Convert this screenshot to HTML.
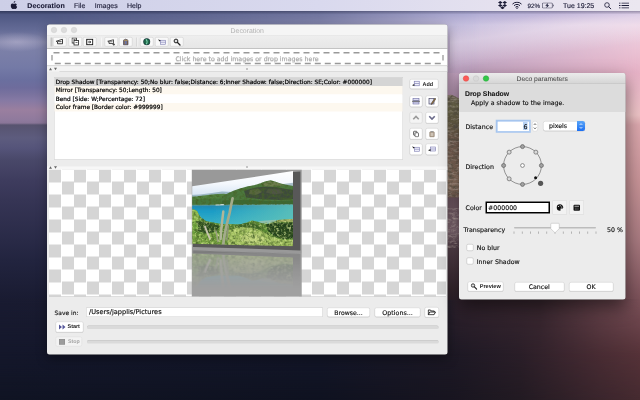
<!DOCTYPE html>
<html lang="en"><head><meta charset="utf-8"><title>Decoration</title>
<style>
html,body{margin:0;padding:0;width:640px;height:400px;overflow:hidden;background:#1a1d35}
#stage{text-rendering:geometricPrecision;position:absolute;left:0;top:0;width:1280px;height:800px;transform:scale(.5);transform-origin:0 0;overflow:hidden;font-family:"DejaVu Sans","Liberation Sans",sans-serif;color:#111}
#stage div,#stage svg,#stage span{position:absolute;box-sizing:border-box}
.t{white-space:pre;line-height:1;-webkit-text-stroke:.3px currentColor}
.mb{-webkit-text-stroke:.25px currentColor;font-family:"Liberation Sans",sans-serif;font-size:14px;color:#1b1b36;top:4px;line-height:15px;white-space:pre}
.btn{background:#fff;border:1px solid #cfcfcf;border-radius:4px;box-shadow:0 1px 1px rgba(0,0,0,.12)}
.tb{background:#f9f9f9;border:1px solid #c9c9c9;border-radius:3px}
.row{left:0;width:100%;height:17px}
.lt{-webkit-text-stroke:.4px currentColor;font-size:11.62px;left:2.5px;top:2.5px;color:#000;white-space:pre;line-height:13px}
</style></head>
<body><div id="stage">
<div style="left:0;top:0;width:1280px;height:800px;background:linear-gradient(to bottom,#465078 0px,#465078 22px,#4f5883 30px,#646b96 60px,#8587ab 84px,#7c80a8 100px,#747aa6 135px,#6a6f9f 160px,#6e6c9c 175px,#7b739f 190px,#8579a4 200px,#9a7f9f 220px,#8f7a9d 240px,#8a7698 246px,#58546f 250px,#595674 258px,#5d5c7e 276px,#55547a 296px,#494869 320px,#3e3c5e 360px,#363555 400px,#292a47 480px,#22243f 520px,#191b31 600px,#14172b 710px,#101423 800px)"></div>
<div style="left:0;top:50px;width:100px;height:70px;background:radial-gradient(ellipse 62px 20px at 34px 34px,rgba(200,195,222,.42),rgba(200,195,222,0))"></div>
<div style="left:0;top:0;width:1280px;height:200px;background:linear-gradient(to bottom,#a9a7d2 0px,#a9a7d2 22px,#bcb6da 36px,#cbc3e1 50px,#c6b3d0 90px,#bfa0bc 146px,#b997b3 200px);-webkit-mask-image:linear-gradient(to right,rgba(0,0,0,0) 94px,rgba(0,0,0,0.17) 400px,rgba(0,0,0,0.35) 640px,rgba(0,0,0,0.68) 800px,rgba(0,0,0,0.9) 900px,rgba(0,0,0,1) 960px);mask-image:linear-gradient(to right,rgba(0,0,0,0) 94px,rgba(0,0,0,0.17) 400px,rgba(0,0,0,0.35) 640px,rgba(0,0,0,0.68) 800px,rgba(0,0,0,0.9) 900px,rgba(0,0,0,1) 960px)"></div>
<div style="left:0;top:0;width:1280px;height:200px;background:linear-gradient(to bottom,#c8b8dc 0px,#c8b8dc 22px,#ecd4e4 50px,#ebc2d4 100px,#e6b2c6 146px,#e8b6c4 200px);-webkit-mask-image:linear-gradient(to right,rgba(0,0,0,0) 940px,rgba(0,0,0,1) 1280px);mask-image:linear-gradient(to right,rgba(0,0,0,0) 940px,rgba(0,0,0,1) 1280px)"></div>
<div style="left:900px;top:22px;width:380px;height:124px;background:linear-gradient(172deg,rgba(255,255,255,0) 18%,rgba(255,250,255,.28) 36%,rgba(255,250,255,.22) 46%,rgba(255,255,255,0) 66%)"></div>
<div style="left:1236px;top:146px;width:44px;height:454px;background:linear-gradient(to bottom,#e6b2c6 0px,#ecbec8 54px,#eec4c6 84px,#dca8ae 104px,#c89498 214px,#a87a80 334px,#7a5058 454px)"></div>
<div style="left:0;top:598px;width:1280px;height:202px;background:linear-gradient(to right,#14172b 0px,#131628 640px,#1c1824 900px,#2a1e28 1040px,#482c33 1200px,#553238 1280px)"></div>
<div style="left:0;top:598px;width:1280px;height:202px;background:linear-gradient(to right,#191b31 0px,#221f2c 880px,#30222c 920px,#3a2830 1080px,#64424a 1200px,#7a5058 1280px);-webkit-mask-image:linear-gradient(to bottom,#000 0,#000 2px,rgba(0,0,0,0) 112px);mask-image:linear-gradient(to bottom,#000 0,#000 2px,rgba(0,0,0,0) 112px)"></div>
<div style="left:0;top:598px;width:1280px;height:202px;background:linear-gradient(to right,#101423 0px,#0f1220 640px,#181520 900px,#221a22 1040px,#3a252c 1200px,#452a30 1280px);-webkit-mask-image:linear-gradient(to bottom,rgba(0,0,0,0) 112px,#000 202px);mask-image:linear-gradient(to bottom,rgba(0,0,0,0) 112px,#000 202px)"></div>
<svg style="left:884px;top:146px" width="46" height="454" viewBox="0 0 46 454"><defs><linearGradient id="gsky" x1="0" y1="0" x2="0" y2="1"><stop offset="0" stop-color="#bfa0bc"/><stop offset="1" stop-color="#b08fab"/></linearGradient><linearGradient id="gis" gradientUnits="userSpaceOnUse" x1="0" y1="44" x2="0" y2="250"><stop offset="0" stop-color="#86796a"/><stop offset=".1" stop-color="#716d4e"/><stop offset=".28" stop-color="#6d6349"/><stop offset=".45" stop-color="#7b6355"/><stop offset=".7" stop-color="#846b5b"/><stop offset=".88" stop-color="#957967"/><stop offset="1" stop-color="#735b4f"/></linearGradient><linearGradient id="gwa" gradientUnits="userSpaceOnUse" x1="0" y1="249" x2="0" y2="454"><stop offset="0" stop-color="#6e5660"/><stop offset=".15" stop-color="#765e68"/><stop offset=".33" stop-color="#826a74"/><stop offset=".48" stop-color="#57434d"/><stop offset=".9" stop-color="#37272f"/><stop offset="1" stop-color="#30222c"/></linearGradient><filter id="gn" x="0" y="0" width="100%" height="100%"><feTurbulence type="fractalNoise" baseFrequency=".09 .16" numOctaves="3" seed="11"/><feColorMatrix values="0 0 0 0 .12  0 0 0 0 .1  0 0 0 0 .07  2.0 1.3 0 0 -1.5"/></filter><filter id="gl" x="0" y="0" width="100%" height="100%"><feTurbulence type="fractalNoise" baseFrequency=".1 .2" numOctaves="3" seed="29"/><feColorMatrix values="0 0 0 0 .72  0 0 0 0 .62  0 0 0 0 .55  0 1.6 1.6 0 -1.5"/></filter><clipPath id="gic"><polygon points="0,46 11,44.500 18,43.600 26,46.500 34,51 46,57 46,250 0,250"/></clipPath></defs><rect width="46" height="60" fill="url(#gsky)"/><polygon points="0,46 11,44.500 18,43.600 26,46.500 34,51 46,57 46,250 0,250" fill="url(#gis)"/><g clip-path="url(#gic)"><rect y="40" width="46" height="212" filter="url(#gn)"/><rect y="40" width="46" height="212" filter="url(#gl)" opacity=".55"/></g><rect y="249" width="46" height="205" fill="url(#gwa)"/><rect y="270" width="46" height="80" filter="url(#gl)" opacity=".55"/></svg>
<div style="left:0;top:0;width:1280px;height:22px;background:linear-gradient(to right,#cdcfe7,#d9d9ee 50%,#e6e2ef 80%,#ebe7f0)"></div>
<div style="left:0;top:22px;width:1280px;height:7px;background:linear-gradient(to bottom,rgba(0,0,20,.28),rgba(0,0,20,0))"></div>
<svg style="left:21px;top:2px" width="14" height="17" viewBox="0 0 14 17"><path fill="#1b1b36" d="M9.6 0c.1 1-.3 1.9-.9 2.6-.6.7-1.500 1.200-2.400 1.100-.1-.9.400-1.900.9-2.500C7.800.5 8.800.1 9.600 0zM12.900 5.800c-.9.600-1.500 1.500-1.500 2.700 0 1.400.800 2.500 2 3-.300.900-.700 1.700-1.200 2.400-.700 1-1.400 2-2.500 2s-1.400-.600-2.600-.600-1.600.600-2.600.600-1.800-1-2.500-2C.600 12-.300 8.900.900 6.800c.600-1.100 1.800-1.800 3-1.800 1.100 0 1.900.700 2.800.700.900 0 1.500-.700 2.900-.700.900 0 2.300.400 3.300 1.800z"/></svg>
<span class="mb" style="left:54.5px;font-weight:700;letter-spacing:.2px">Decoration</span>
<span class="mb" style="left:148px">File</span>
<span class="mb" style="left:189.5px">Images</span>
<span class="mb" style="left:254px">Help</span>
<span class="mb" style="left:1055px;font-size:12.5px">92%</span>
<span class="mb" style="left:1126px">Tue 19:25</span>
<svg style="left:996px;top:2px" width="18" height="17" viewBox="0 0 18 17"><g fill="#1b1b36"><path d="M4.500 0L9 3 4.500 6 0 3zM13.500 0L18 3 13.500 6 9 3zM4.500 6L9 9 4.500 12 0 9zM13.500 6L18 9 13.500 12 9 9zM9 10.500l4.500 3L9 16.500l-4.500-3z"/></g></svg>
<svg style="left:1024px;top:3px" width="20" height="15" viewBox="0 0 20 15"><g fill="none" stroke="#1b1b36" stroke-width="2" stroke-linecap="butt"><path d="M1 5.200a12.500 12.500 0 0 1 18 0"/><path d="M4 8.400a8.300 8.300 0 0 1 12 0"/><path d="M7 11.400a4.200 4.200 0 0 1 6 0"/></g><circle cx="10" cy="13.500" r="1.400" fill="#1b1b36"/></svg>
<svg style="left:1084px;top:5px" width="25" height="12" viewBox="0 0 25 12"><rect x=".75" y=".75" width="20" height="10.500" rx="2" fill="none" stroke="#1b1b36" stroke-width="1.500" stroke-opacity=".75"/><path d="M22.500 4v4c1-.300 1.500-1 1.500-2s-.500-1.700-1.500-2z" fill="#1b1b36" fill-opacity=".75"/><path d="M12 1.200L6.500 6.500h3.500l-1.500 4.300L14.500 5.300h-3.500z" fill="#1b1b36"/></svg>
<svg style="left:1208px;top:4px" width="15" height="15" viewBox="0 0 15 15"><circle cx="6" cy="6" r="4.600" fill="none" stroke="#1b1b36" stroke-width="1.600"/><path d="M9.400 9.400L14 14" stroke="#1b1b36" stroke-width="1.900" stroke-linecap="round"/></svg>
<svg style="left:1238px;top:5px" width="20" height="12" viewBox="0 0 20 12"><g fill="#1b1b36"><rect x="0" y="0" width="3" height="2"/><rect x="5" y="0" width="15" height="2"/><rect x="0" y="5" width="3" height="2"/><rect x="5" y="5" width="15" height="2"/><rect x="0" y="10" width="3" height="2"/><rect x="5" y="10" width="15" height="2"/></g></svg>
<div id="mw" style="left:94px;top:49px;width:801px;height:660px;background:#ececec;border-radius:5px;box-shadow:0 0 1px rgba(0,0,0,.5),0 8px 22px rgba(0,0,0,.35);overflow:hidden"><div style="left:0;top:0;width:801px;height:22px;background:#f5f5f5;border-bottom:1px solid #d4d4d4"></div><div style="left:8px;top:5px;width:12px;height:12px;border-radius:6px;background:#dcdcdc;border:1px solid #cfcfcf"></div><div style="left:28px;top:5px;width:12px;height:12px;border-radius:6px;background:#dcdcdc;border:1px solid #cfcfcf"></div><div style="left:48px;top:5px;width:12px;height:12px;border-radius:6px;background:#dcdcdc;border:1px solid #cfcfcf"></div><span class="t" style="left:0;width:801px;top:4px;text-align:center;font-family:'Liberation Sans',sans-serif;font-size:13.800px;color:#b2b2b2;line-height:15px;-webkit-text-stroke:0">Decoration</span><div style="left:0;top:22px;width:801px;height:27px;background:linear-gradient(#eeeeee,#e6e6e6);border-bottom:1px solid #9c9c9c"></div><div style="left:7px;top:26px;width:4px;height:18px;background:repeating-linear-gradient(#c4c4c4 0 1px,#efefef 1px 2px)"></div><div class="tb" style="left:12.0px;top:25px;width:27px;height:19px"></div><div class="tb" style="left:43.0px;top:25px;width:27px;height:19px"></div><div class="tb" style="left:72.0px;top:25px;width:27px;height:19px"></div><div class="tb" style="left:114.8px;top:25px;width:27px;height:19px"></div><div class="tb" style="left:144.0px;top:25px;width:27px;height:19px"></div><div class="tb" style="left:185.5px;top:25px;width:27px;height:19px"></div><div class="tb" style="left:216.0px;top:25px;width:27px;height:19px"></div><div class="tb" style="left:245.5px;top:25px;width:27px;height:19px"></div><div style="left:108.0px;top:26px;width:2px;height:18px;background:linear-gradient(to right,#c9c9c9 50%,#f6f6f6 50%)"></div><div style="left:178.5px;top:26px;width:2px;height:18px;background:linear-gradient(to right,#c9c9c9 50%,#f6f6f6 50%)"></div><svg style="left:17.0px;top:28.0px" width="17" height="14" viewBox="0 0 17 14"><path d="M1.500 5.500L14 1.500v9H4V6.800z" fill="#fff" stroke="#1a1a1a" stroke-width="1.700" stroke-linejoin="round"/><path d="M4 6.300h8" stroke="#1a1a1a" stroke-width="1.500"/></svg><svg style="left:49.0px;top:26.0px" width="16" height="17" viewBox="0 0 16 17"><rect x="1" y="1" width="9" height="10" fill="#fff" stroke="#222" stroke-width="1.600"/><rect x="5" y="6" width="9" height="9" fill="#fff" stroke="#222" stroke-width="1.600"/><path d="M4 4h4M8 10h4" stroke="#222" stroke-width="1.300"/></svg><svg style="left:78.0px;top:28.0px" width="15" height="14" viewBox="0 0 15 14"><rect x="1.500" y="1.500" width="12" height="11" fill="#fff" stroke="#111" stroke-width="2"/><path d="M4 7h5M7 4.500L9.500 7 7 9.500" fill="none" stroke="#111" stroke-width="1.600"/></svg><svg style="left:119.8px;top:29.0px" width="18" height="14" viewBox="0 0 18 14"><path d="M1.500 4.500L13 1.500v7.500H4V6z" fill="#fff" stroke="#2a2a2a" stroke-width="1.600" stroke-linejoin="round"/><path d="M4 5.500h7" stroke="#2a2a2a" stroke-width="1.300"/><path d="M11 11h5M13.500 8.500v5" stroke="#2a2a2a" stroke-width="1.400"/></svg><svg style="left:150.0px;top:27.0px" width="15" height="16" viewBox="0 0 15 16"><path d="M3 4.500Q7.500 0 12 4.500v9H3z" fill="#8a6d4f" stroke="#3a3a5a" stroke-width="1.300"/><rect x="5.500" y="6" width="4" height="6" fill="#6a77a8"/><path d="M3 4.500h9" stroke="#c8b070" stroke-width="1.200"/></svg><svg style="left:191.5px;top:27.0px" width="15" height="15" viewBox="0 0 15 15"><circle cx="7.500" cy="7.500" r="6.500" fill="#1f6a4a" stroke="#123" stroke-width="1.200"/><path d="M6 2.500Q10 7 6.500 12.500" stroke="#7fd0b0" stroke-width="2.200" fill="none"/></svg><svg style="left:221.0px;top:28.0px" width="18" height="14" viewBox="0 0 18 14"><rect x="6" y="3.500" width="10" height="8" fill="#f0f0fb" stroke="#7a7ab0" stroke-width="1.200"/><path d="M6 7.500h10" stroke="#7a7ab0" stroke-width="1.200"/><path d="M1.500 1.500l5 2.500-3 2z" fill="#222"/></svg><svg style="left:251.5px;top:27.0px" width="16" height="16" viewBox="0 0 16 16"><circle cx="6" cy="6" r="3.800" fill="#ddd" stroke="#222" stroke-width="2"/><path d="M9 9l5 5" stroke="#222" stroke-width="2.600" stroke-linecap="round"/></svg><div style="left:0;top:49px;width:801px;height:34px;background:#fff;border-bottom:1px solid #b8b8b8"></div><svg style="left:0;top:48px" width="801" height="35" viewBox="0 0 801 35"><g stroke="#999999" stroke-width="2.600" fill="none"><path d="M13 8.500H786" stroke-dasharray="12 8"/><path d="M15.500 30H788" stroke-dasharray="12 8"/><path d="M10 13v11M792 13v11"/></g></svg><span class="t" style="left:257px;top:61px;font-size:12.52px;color:#aaaaaa;line-height:15px;text-shadow:0 1px 0 #e4e4e4">Click here to add images or drop images here</span><div style="left:0;top:84px;width:801px;height:10px;background:#f4f4f4"></div><div style="left:25px;top:93.500px;width:776px;height:1px;background:#c6c6c6"></div><svg style="left:2px;top:85px" width="24" height="8" viewBox="0 0 24 8"><path d="M2 6.500l3-5 3 5zM12 1.500l3 5 3-5z" fill="#666"/></svg><div style="left:398px;top:87px;width:4px;height:4px;border-radius:2px;background:#b5b5b5"></div><div style="left:14px;top:104.500px;width:698px;height:165px;background:#fff;border:1px solid #cdcdcd;border-top-color:#b4b4b4;overflow:hidden"></div><div style="left:15px;top:105.5px;width:696px;height:17px;background:#d5d5d5"><span class="lt">Drop Shadow [Transparency: 50;No blur: false;Distance: 6;Inner Shadow: false;Direction: SE;Color: #000000]</span></div><div style="left:15px;top:122.5px;width:696px;height:17px;background:#fdf8ef"><span class="lt">Mirror [Transparency: 50;Length: 50]</span></div><div style="left:15px;top:139.5px;width:696px;height:17px;background:#ffffff"><span class="lt">Bend [Side: W;Percentage: 72]</span></div><div style="left:15px;top:156.5px;width:696px;height:17px;background:#fdf8ef"><span class="lt">Color frame [Border color: #999999]</span></div><div class="btn" style="left:725px;top:109px;width:58px;height:20px"></div><span class="t" style="left:751px;top:112.500px;font-family:'Liberation Sans',sans-serif;font-size:10.900px;font-weight:700;color:#222;line-height:13px;-webkit-text-stroke:0">Add</span><svg style="left:729.0px;top:111.0px" width="20" height="14" viewBox="0 0 20 14"><rect x="5.500" y="2.500" width="10" height="9" fill="#f1f1fb" stroke="#7d7db0" stroke-width="1.300"/><path d="M5.500 7h10" stroke="#7d7db0" stroke-width="1.300"/><path d="M1 10.500l4.500-2.500v4z" fill="#1a1a1a"/></svg><div class="btn" style="left:725px;top:142.0px;width:26px;height:23px;"></div><svg style="left:729.0px;top:146.0px" width="18" height="15" viewBox="0 0 18 15"><rect x="3" y="2" width="12" height="4" fill="#dcdcf2" stroke="#6a6aa2" stroke-width="1.200"/><rect x="3" y="9" width="12" height="4" fill="#dcdcf2" stroke="#6a6aa2" stroke-width="1.200"/><path d="M1 7.500h16" stroke="#333" stroke-width="1.500"/></svg><div class="btn" style="left:757px;top:142.0px;width:26px;height:23px;"></div><svg style="left:761.0px;top:146.0px" width="18" height="15" viewBox="0 0 18 15"><rect x="3" y="2" width="10" height="11" fill="#e8e8f4" stroke="#4a4a6a" stroke-width="1.400"/><path d="M15 1L8 11l-1 3 3-1.500L16.500 3z" fill="#a07840" stroke="#333" stroke-width="1"/></svg><div class="btn" style="left:725px;top:174.5px;width:26px;height:23px;background:#f4f4f4;box-shadow:none;"></div><svg style="left:729.0px;top:178.5px" width="18" height="15" viewBox="0 0 18 15"><path d="M3.500 10.500l5.500-5.500 5.500 5.500" fill="none" stroke="#9a9a9a" stroke-width="3.200"/></svg><div class="btn" style="left:757px;top:174.5px;width:26px;height:23px;"></div><svg style="left:761.0px;top:178.5px" width="18" height="15" viewBox="0 0 18 15"><path d="M3.500 4.500l5.500 5.500 5.500-5.500" fill="none" stroke="#6a6a8a" stroke-width="3.200"/></svg><div class="btn" style="left:725px;top:206.5px;width:26px;height:23px;"></div><svg style="left:729.0px;top:210.5px" width="18" height="15" viewBox="0 0 18 15"><rect x="4" y="2.500" width="7" height="8" rx="1.500" fill="#ddd" stroke="#3a3a3a" stroke-width="1.400"/><rect x="7" y="5.500" width="7" height="8" rx="1.500" fill="#fff" stroke="#3a3a3a" stroke-width="1.400"/></svg><div class="btn" style="left:757px;top:206.5px;width:26px;height:23px;"></div><svg style="left:761.0px;top:210.5px" width="18" height="15" viewBox="0 0 18 15"><rect x="4.500" y="3.500" width="9" height="10.500" rx="1.500" fill="#b5a592" stroke="#8c7d6e" stroke-width="1.200"/><rect x="6.500" y="6" width="5" height="6" fill="#cdc3b6"/><rect x="6.500" y="2" width="5" height="2.500" fill="#9a9a9a"/></svg><div class="btn" style="left:725px;top:238.0px;width:26px;height:23px;"></div><svg style="left:729.0px;top:242.0px" width="18" height="15" viewBox="0 0 18 15"><rect x="6" y="3.500" width="10" height="8" fill="#f0f0fb" stroke="#7a7ab0" stroke-width="1.200"/><path d="M6 7.500h10" stroke="#7a7ab0" stroke-width="1.200"/><path d="M1.500 1.500l5 2.500-3 2z" fill="#222"/></svg><div class="btn" style="left:757px;top:238.0px;width:26px;height:23px;"></div><svg style="left:761.0px;top:242.0px" width="18" height="15" viewBox="0 0 18 15"><rect x="6" y="3" width="10" height="8" fill="#f0f0fb" stroke="#7a7ab0" stroke-width="1.200"/><path d="M6 7h10" stroke="#7a7ab0" stroke-width="1.200"/><path d="M1 9.500l5-2.500v4.500z" fill="#222"/></svg><div style="left:0;top:283.500px;width:801px;height:7px;background:#f7f7f7"></div><svg style="left:2px;top:282px" width="24" height="8" viewBox="0 0 24 8"><path d="M2 6.500l3-5 3 5zM12 1.500l3 5 3-5z" fill="#666"/></svg><div style="left:398px;top:282.500px;width:4px;height:4px;border-radius:2px;background:#b5b5b5"></div><div id="pv" style="left:4px;top:290px;width:794px;height:255px;overflow:hidden;background-color:#fff;background-image:repeating-conic-gradient(#fff 0 25%,#d5d5d5 0 50%);background-size:50px 50px;border-bottom:1px solid #bdbdbd"><svg style="left:0;top:0" width="794" height="255" viewBox="0 0 794 255"><defs><clipPath id="q"><polygon points="286.4,33.6 488.0,3.2 488.0,153.6 286.4,148.6"/></clipPath><linearGradient id="sky" gradientUnits="userSpaceOnUse" x1="0" y1="3.0" x2="0" y2="59.0"><stop offset="0" stop-color="#ffffff"/><stop offset=".45" stop-color="#f4f8fd"/><stop offset="1" stop-color="#cfe0f2"/></linearGradient><linearGradient id="sea" gradientUnits="userSpaceOnUse" x1="0" y1="71.0" x2="0" y2="111.0"><stop offset="0" stop-color="#2286ae"/><stop offset=".3" stop-color="#1b9cc6"/><stop offset="1" stop-color="#3ab2c6"/></linearGradient><linearGradient id="sea2" gradientUnits="userSpaceOnUse" x1="326.0" y1="0" x2="490.0" y2="0"><stop offset="0" stop-color="#6fcab8" stop-opacity="0"/><stop offset="1" stop-color="#66c6b6" stop-opacity=".8"/></linearGradient><linearGradient id="fade" x1="0" y1="0" x2="0" y2="1"><stop offset="0" stop-color="#fff" stop-opacity=".42"/><stop offset=".75" stop-color="#fff" stop-opacity=".08"/><stop offset="1" stop-color="#fff" stop-opacity="0"/></linearGradient><mask id="mf" maskUnits="userSpaceOnUse" x="0" y="0" width="794" height="255"><rect x="278.0" y="155.0" width="240" height="82.0" fill="url(#fade)"/></mask><filter id="b1" x="-20%" y="-20%" width="140%" height="140%"><feGaussianBlur stdDeviation="1.1"/></filter><filter id="b2" x="-5%" y="-5%" width="110%" height="110%"><feGaussianBlur stdDeviation=".8"/></filter><filter id="nz" x="0" y="0" width="100%" height="100%"><feTurbulence type="fractalNoise" baseFrequency=".16" numOctaves="3" seed="7"/><feColorMatrix values="0 0 0 0 .06  0 0 0 0 .12  0 0 0 0 .02  1.7 1.3 0 0 -1.3"/></filter><filter id="nz2" x="0" y="0" width="100%" height="100%"><feTurbulence type="fractalNoise" baseFrequency=".2" numOctaves="3" seed="23"/><feColorMatrix values="0 0 0 0 .68  0 0 0 0 .8  0 0 0 0 .3  0 1.5 1.3 0 -1.36"/></filter><clipPath id="veg"><polygon points="346.0,54.0 358.0,47.4 382.0,38.2 410.0,31.6 432.0,24.2 443.0,21.6 462.0,27.4 494.0,34.0 494.0,70.6 278.0,71.4 278.0,55.0 310.0,51.8 338.0,48.8"/><polygon points="278.0,81.0 290.0,80.0 300.0,91.0 314.0,103.0 346.0,109.0 382.0,110.0 406.0,102.0 426.0,107.0 450.0,104.0 458.0,101.0 494.0,99.4 494.0,161.0 278.0,161.0"/></clipPath><clipPath id="veg2"><polygon points="278.0,81.0 290.0,80.0 300.0,91.0 314.0,103.0 346.0,109.0 382.0,110.0 406.0,102.0 426.0,107.0 450.0,104.0 458.0,101.0 494.0,99.4 494.0,161.0 278.0,161.0"/></clipPath><g id="ph"><g clip-path="url(#q)"><g filter="url(#b2)"><polygon points="278.0,-7.0 494.0,-7.0 494.0,81.0 278.0,81.0" fill="url(#sky)"/><polygon points="278.0,51.0 302.0,50.0 326.0,47.0 346.0,44.0 366.0,45.0 382.0,47.0 382.0,61.0 278.0,61.0" fill="#9db8c6"/><polygon points="462.0,30.0 476.0,28.0 494.0,26.0 494.0,41.0 462.0,41.0" fill="#a9bfca"/><polygon points="278.0,55.0 294.0,53.8 310.0,51.8 326.0,49.8 338.0,48.8 350.0,48.4 362.0,51.0 378.0,57.0 378.0,73.0 278.0,73.0" fill="#52823f"/><polygon points="278.0,62.0 310.0,59.0 346.0,58.0 374.0,62.0 374.0,73.0 278.0,73.0" fill="#47753a"/><polygon points="346.0,54.0 358.0,47.4 370.0,42.2 382.0,38.2 396.0,34.2 410.0,31.6 422.0,28.0 432.0,24.2 443.0,21.6 452.0,24.0 462.0,27.4 474.0,30.6 494.0,34.0 494.0,73.0 346.0,73.0" fill="#4c773d"/><polygon points="390.0,42.0 414.0,36.0 434.0,34.0 454.0,35.0 474.0,39.0 494.0,41.0 494.0,59.0 462.0,61.0 426.0,59.6 394.0,56.0" fill="#3e4b3b"/><polygon points="426.0,28.2 443.0,22.4 458.0,27.0 470.0,32.2 450.0,34.2 430.0,33.4" fill="#6d7c4e"/><polygon points="402.0,41.0 418.0,38.0 426.0,45.0 414.0,51.0 400.0,49.0" fill="#59663f"/><polygon points="438.0,39.0 462.0,40.0 470.0,47.0 450.0,50.0 434.0,46.0" fill="#4f5544"/><polygon points="346.0,62.0 402.0,60.6 442.0,63.4 494.0,62.2 494.0,71.8 346.0,72.6" fill="#3d6833"/><polygon points="278.0,71.6 494.0,70.2 494.0,115.0 278.0,115.0" fill="url(#sea)"/><polygon points="326.0,71.0 494.0,70.2 494.0,115.0 326.0,115.0" fill="url(#sea2)"/><polygon points="333.0,69.4 350.0,69.2 350.0,71.6 333.0,71.8" fill="#e6ebe6"/><polygon points="278.0,70.6 494.0,69.2 494.0,71.2 278.0,72.6" fill="#7fb0b0" opacity=".55"/><polygon points="278.0,81.0 290.0,80.0 296.0,83.0 300.0,91.0 306.0,98.0 314.0,103.0 328.0,106.0 346.0,109.0 362.0,109.0 382.0,110.0 396.0,106.0 406.0,102.0 416.0,104.0 426.0,107.0 438.0,108.0 450.0,104.0 458.0,101.0 494.0,99.4 494.0,161.0 278.0,161.0" fill="#5b8b34"/><polygon points="418.0,103.4 434.0,102.0 454.0,100.6 456.0,104.2 438.0,108.4 426.0,107.4" fill="#90c0ae"/><polygon points="456.0,101.0 472.0,99.8 494.0,98.6 494.0,104.2 470.0,105.2 456.0,104.8" fill="#aab566"/><polygon points="434.0,110.0 450.0,106.2 470.0,106.4 494.0,105.4 494.0,137.0 470.0,139.4 450.0,133.0 438.0,123.0" fill="#21401c"/><polygon points="294.0,103.0 310.0,105.0 328.0,108.0 342.0,113.0 334.0,124.0 314.0,128.0 298.0,123.0" fill="#2c4c22"/><polygon points="278.0,81.0 290.0,80.0 296.0,83.0 300.0,91.0 299.0,103.0 278.0,106.0" fill="#8dba4e"/><polygon points="374.0,111.0 398.0,107.0 414.0,109.0 426.0,119.0 406.0,117.4 382.0,118.6" fill="#3d6427"/><polygon points="358.0,122.0 382.0,115.4 406.0,116.2 426.0,123.0 446.0,135.0 470.0,141.0 494.0,140.0 494.0,161.0 358.0,161.0" fill="#a2c060"/><polygon points="278.0,126.0 302.0,129.0 330.0,126.6 354.0,127.4 358.0,161.0 278.0,161.0" fill="#76a340"/><polygon points="382.0,133.0 410.0,127.0 434.0,137.0 426.0,147.0 394.0,149.0" fill="#bcd078"/><polygon points="278.0,107.0 294.0,105.0 300.0,117.0 290.0,127.0 278.0,127.0" fill="#6ea23c"/><rect x="278.0" y="17.0" width="220" height="148" filter="url(#nz)" clip-path="url(#veg)"/><rect x="278.0" y="17.0" width="220" height="148" filter="url(#nz2)" clip-path="url(#veg2)"/><polyline points="367.2,57.6 364.6,69.6 361.2,87.0 355.8,109.0 350.6,133.0 348.4,151.0" fill="none" stroke="#a3ab8c" stroke-width="5.4" stroke-linecap="round" stroke-linejoin="round"/><polyline points="348.6,84.2 345.4,111.0 343.2,139.0" fill="none" stroke="#b0b698" stroke-width="5.0" stroke-linecap="round" stroke-linejoin="round"/><polyline points="312.0,114.2 316.0,125.0 321.8,138.2" fill="none" stroke="#c6c4ac" stroke-width="3.8" stroke-linecap="round" stroke-linejoin="round"/><polyline points="334.0,123.0 338.0,144.0" fill="none" stroke="#9aa080" stroke-width="2.8" stroke-linecap="round" stroke-linejoin="round"/><polyline points="358.6,113.0 355.6,141.0" fill="none" stroke="#8c9474" stroke-width="3.0" stroke-linecap="round" stroke-linejoin="round"/></g></g></g></defs><rect x="285.6" y="-1.0" width="219.8" height="260" fill="#999999"/><polygon points="288.0,141.0 482.0,141.0 482.0,5.6 502.8,4.0 502.8,161.8 394.0,158.2 288.0,154.8" fill="#595959" filter="url(#b1)"/><g mask="url(#mf)"><g transform="matrix(1 0.06356 0 -1 0 298.585)"><polygon points="288.0,141.0 482.0,141.0 482.0,5.6 502.8,4.0 502.8,161.8 394.0,158.2 288.0,154.8" fill="#4a4a4a" filter="url(#b1)"/><use href="#ph"/></g></g><rect x="285.6" y="167.0" width="219.8" height="90" fill="#fff" opacity=".07"/><use href="#ph"/></svg></div><span class="t" style="left:15px;top:569px;font-size:11.900px;color:#1a1a1a;line-height:14px">Save in:</span><div style="left:79px;top:565px;width:472px;height:20px;background:#fff;border:1px solid #d0d0d0;border-top-color:#bdbdbd"></div><span class="t" style="left:84px;top:569px;font-size:13.200px;color:#111;line-height:14px">/Users/japplis/Pictures</span><div class="btn" style="left:560px;top:566px;width:86px;height:19px"></div><span class="t" style="left:560px;width:86px;text-align:center;top:568.500px;font-size:12.300px;line-height:14px">Browse...</span><div class="btn" style="left:655px;top:566px;width:92px;height:19px"></div><span class="t" style="left:655px;width:92px;text-align:center;top:568.500px;font-size:12.700px;line-height:14px">Options...</span><div class="btn" style="left:755px;top:565px;width:28.500px;height:21px"></div><svg style="left:761.0px;top:569.0px" width="17" height="13" viewBox="0 0 17 13"><path d="M1.500 11.500V2h4.500l1.500 2h6v2" fill="none" stroke="#111" stroke-width="1.700"/><path d="M1.500 11.500L4.500 6h11.500l-3 5.500z" fill="#fff" stroke="#111" stroke-width="1.700"/></svg><div class="btn" style="left:16.500px;top:593.500px;width:56px;height:22px"></div><svg style="left:23.0px;top:599.0px" width="15" height="12" viewBox="0 0 15 12"><path d="M1 1l6 5-6 5zM8 1l6 5-6 5z" fill="#55579a"/></svg><span class="t" style="left:41px;top:598px;font-family:'Liberation Sans',sans-serif;font-size:10.900px;font-weight:700;color:#222;line-height:13px;-webkit-text-stroke:0">Start</span><div class="btn" style="left:16.500px;top:624px;width:53px;height:20px;background:#f3f3f3;box-shadow:none;border-color:#dcdcdc"></div><div style="left:24px;top:628.500px;width:12px;height:11.500px;background:#9c9c9c;border:1px solid #8a8a8a"></div><span class="t" style="left:42px;top:628px;font-family:'Liberation Sans',sans-serif;font-size:10.700px;font-weight:700;color:#a8a8a8;line-height:13px;-webkit-text-stroke:0">Stop</span><div style="left:80px;top:602px;width:703px;height:6.500px;border-radius:3px;background:#dadada;box-shadow:inset 0 1px 1px rgba(0,0,0,.12)"></div><div style="left:80px;top:631px;width:703px;height:6.500px;border-radius:3px;background:#dadada;box-shadow:inset 0 1px 1px rgba(0,0,0,.12)"></div></div>
<div id="dlg" style="left:918px;top:146px;width:333px;height:453px;background:#ececec;border-radius:5px;box-shadow:0 0 1px rgba(0,0,0,.55),0 14px 34px rgba(0,0,0,.5);overflow:hidden"><div style="left:0;top:0;width:333px;height:22px;background:linear-gradient(#ebebeb,#d5d5d5);border-bottom:1px solid #b4b4b4"></div><div style="left:8px;top:5px;width:12px;height:12px;border-radius:6px;background:#fc5b57;border:1px solid #de4643"></div><div style="left:28px;top:5px;width:12px;height:12px;border-radius:6px;background:#d9d9d9;border:1px solid #c4c4c4"></div><div style="left:48px;top:5px;width:12px;height:12px;border-radius:6px;background:#33c748;border:1px solid #27a93a"></div><span class="t" style="left:0;width:333px;top:4px;text-align:center;font-family:'Liberation Sans',sans-serif;font-size:13.400px;color:#4a4a4a;line-height:15px;-webkit-text-stroke:.1px">Deco parameters</span><div style="left:0;top:22px;width:333px;height:56px;background:#dcdcdc"></div><span class="t" style="left:12px;top:33.500px;font-family:'Liberation Sans',sans-serif;font-size:13.700px;font-weight:700;color:#111;line-height:15px;-webkit-text-stroke:.15px">Drop Shadow</span><span class="t" style="left:24px;top:51px;font-size:12.500px;color:#111;line-height:15px">Apply a shadow to the image.</span><span class="t" style="left:13px;top:98.500px;font-size:12.580px;line-height:15px">Distance</span><div style="left:75.500px;top:95.500px;width:65px;height:21px;background:#fff;border:1px solid #8fb8ee;box-shadow:0 0 0 2.500px rgba(110,165,240,.55)"></div><div style="left:128px;top:98px;width:9px;height:16px;background:#b8d2f4"></div><span class="t" style="left:129px;top:98.500px;font-size:12.500px;line-height:15px">6</span><div style="left:145.500px;top:96px;width:12px;height:20.500px;background:#fff;border:1px solid #cfcfcf;border-radius:5px"></div><svg style="left:147.500px;top:99px" width="8" height="15" viewBox="0 0 8 15"><path d="M1.500 5L4 2.200 6.500 5M1.500 10L4 12.800 6.500 10" fill="none" stroke="#444" stroke-width="1.400"/></svg><div class="btn" style="left:167.500px;top:95.500px;width:84px;height:20px;border-radius:4.500px"></div><div style="left:235.500px;top:95.500px;width:16px;height:20px;border-radius:0 4.500px 4.500px 0;background:linear-gradient(#5aa5f7,#1c6ff2)"></div><svg style="left:239.500px;top:99px" width="8" height="14" viewBox="0 0 8 14"><path d="M1.300 5L4 2.200 6.700 5M1.300 9L4 11.800 6.700 9" fill="none" stroke="#fff" stroke-width="1.500"/></svg><span class="t" style="left:180px;top:97.500px;font-size:12.500px;line-height:15px">pixels</span><span class="t" style="left:13px;top:179.500px;font-size:12.580px;line-height:15px">Direction</span><svg style="left:0;top:120px" width="333" height="130" viewBox="0 120 333 130"><circle cx="127" cy="185" r="37.8" fill="none" stroke="#555" stroke-width="1.200"/><circle cx="164.8" cy="185.0" r="4" fill="#a2a2a2" stroke="#5a5a5a" stroke-width="1.300"/><circle cx="153.2" cy="209.7" r="3" fill="#111"/><circle cx="163.2" cy="220.7" r="5.200" fill="#565656"/><circle cx="127.0" cy="222.8" r="4" fill="#a2a2a2" stroke="#5a5a5a" stroke-width="1.300"/><circle cx="100.3" cy="211.7" r="4" fill="#dadada" stroke="#5a5a5a" stroke-width="1.300"/><circle cx="89.2" cy="185.0" r="4" fill="#a2a2a2" stroke="#5a5a5a" stroke-width="1.300"/><circle cx="100.3" cy="158.3" r="4" fill="#dadada" stroke="#5a5a5a" stroke-width="1.300"/><circle cx="127.0" cy="147.2" r="4" fill="#a2a2a2" stroke="#5a5a5a" stroke-width="1.300"/><circle cx="153.7" cy="158.3" r="4" fill="#dadada" stroke="#5a5a5a" stroke-width="1.300"/><circle cx="127" cy="185" r="3.800" fill="#fff" stroke="#555" stroke-width="1.300"/></svg><span class="t" style="left:13px;top:261.500px;font-size:12.580px;line-height:15px">Color</span><div style="left:52.500px;top:256.500px;width:129px;height:24px;background:#fff;border:3px solid #000"></div><span class="t" style="left:58px;top:261px;font-size:12.500px;line-height:15px">#000000</span><div style="left:187.0px;top:254.500px;width:28.500px;height:28.500px;background:#f2f2f2;border:1px solid #d8d8d8"></div><div style="left:221.0px;top:254.500px;width:28.500px;height:28.500px;background:#f2f2f2;border:1px solid #d8d8d8"></div><svg style="left:194px;top:261px" width="16" height="16" viewBox="0 0 16 16"><path d="M8 1.500a6.500 6.500 0 1 0 0 13c1.500 0 1.500-1.500 1-2.300s0-2 1.500-2H13c1 0 1.500-.800 1.500-2C14.500 4.500 11.500 1.500 8 1.500z" fill="#111"/><circle cx="5" cy="6" r="1.200" fill="#eee"/><circle cx="8.500" cy="4.500" r="1.200" fill="#eee"/><circle cx="11.500" cy="7" r="1.200" fill="#eee"/></svg><svg style="left:228px;top:261.500px" width="15" height="15" viewBox="0 0 15 15"><rect x="1" y="1.500" width="13" height="12" rx="2" fill="#141414"/><rect x="3" y="3.600" width="9" height="1.600" fill="#d8d8d8"/><path d="M5 7v5M7.500 7v5M10 7v5" stroke="#6a6a6a" stroke-width="1"/></svg><span class="t" style="left:9px;top:306px;font-size:12.500px;line-height:15px">Transparency</span><div style="left:110px;top:308px;width:164px;height:3px;background:#bcbcbc;border-radius:1.500px"></div><svg style="left:100px;top:295px" width="190" height="30" viewBox="0 0 190 30"><rect x="9.4" y="22" width="1.200" height="4.500" fill="#8e8e8e"/><rect x="25.8" y="22" width="1.200" height="4.500" fill="#8e8e8e"/><rect x="42.2" y="22" width="1.200" height="4.500" fill="#8e8e8e"/><rect x="58.6" y="22" width="1.200" height="4.500" fill="#8e8e8e"/><rect x="75.0" y="22" width="1.200" height="4.500" fill="#8e8e8e"/><rect x="91.4" y="22" width="1.200" height="4.500" fill="#8e8e8e"/><rect x="107.8" y="22" width="1.200" height="4.500" fill="#8e8e8e"/><rect x="124.2" y="22" width="1.200" height="4.500" fill="#8e8e8e"/><rect x="140.6" y="22" width="1.200" height="4.500" fill="#8e8e8e"/><rect x="157.0" y="22" width="1.200" height="4.500" fill="#8e8e8e"/><rect x="173.4" y="22" width="1.200" height="4.500" fill="#8e8e8e"/><path d="M85 5.500h14a1.500 1.500 0 0 1 1.500 1.500v9.500L92 24.500 83.500 16.500V7a1.500 1.500 0 0 1 1.500-1.500z" fill="#fff" stroke="#b4b4b4" stroke-width="1"/></svg><span class="t" style="left:296px;top:306px;font-size:12.500px;line-height:15px">50 %</span><div style="left:15px;top:341.5px;width:14px;height:14px;background:#fff;border:1px solid #b2b2b2;border-radius:3px"></div><span class="t" style="left:35.500px;top:341.0px;font-size:12.500px;line-height:15px">No blur</span><div style="left:15px;top:369.0px;width:14px;height:14px;background:#fff;border:1px solid #b2b2b2;border-radius:3px"></div><span class="t" style="left:35.500px;top:368.5px;font-size:12.500px;line-height:15px">Inner Shadow</span><div class="btn" style="left:16.500px;top:416.500px;width:72.500px;height:20px"></div><svg style="left:23.0px;top:419.5px" width="14" height="14" viewBox="0 0 14 14"><circle cx="5" cy="5" r="3.400" fill="#e4e4e4" stroke="#222" stroke-width="1.700"/><path d="M7.800 7.800l4.500 4.500" stroke="#222" stroke-width="2.400" stroke-linecap="round"/></svg><span class="t" style="left:41.500px;top:420.500px;font-family:'Liberation Sans',sans-serif;font-size:11.100px;font-weight:700;color:#222;line-height:13px;-webkit-text-stroke:0">Preview</span><div class="btn" style="left:110.500px;top:417.500px;width:100px;height:19px"></div><span class="t" style="left:110.500px;width:100px;text-align:center;top:419px;font-size:12.500px;line-height:15px">Cancel</span><div class="btn" style="left:219.500px;top:417.500px;width:89.500px;height:19px"></div><span class="t" style="left:219.500px;width:89.500px;text-align:center;top:419px;font-size:12.500px;line-height:15px">OK</span></div>
</div></body></html>
